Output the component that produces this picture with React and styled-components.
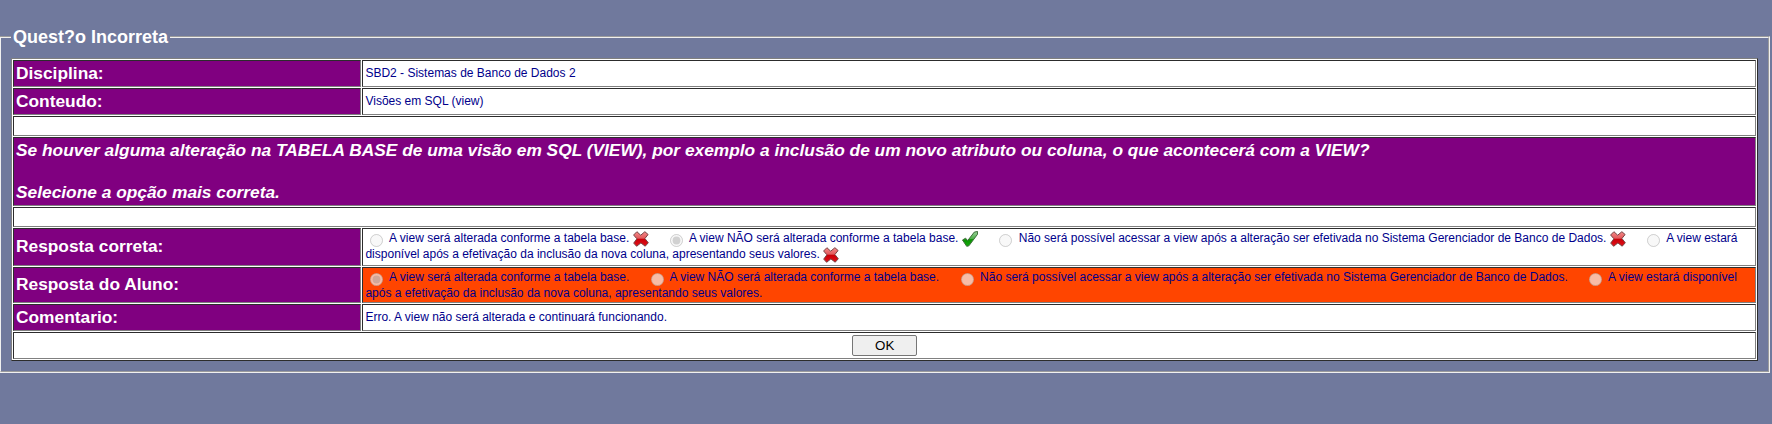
import React from "react";
import styled, { createGlobalStyle } from "styled-components";

const GlobalStyle = createGlobalStyle`
  body {
    margin: 0;
    background: #70799d;
    font-family: "Liberation Sans", Arial, sans-serif;
    overflow: hidden;
  }
`;

const Panel = styled.fieldset`
  box-sizing: border-box;
  width: 1771px;
  height: 347px;
  margin: 26px 0 0 -1px;
  padding: 11px 10px 10px;
  border: 2px groove #f0f0f0;
`;

const Title = styled.legend`
  padding: 1px 2px 0;
  color: #fff;
  font-size: 18px;
  font-weight: bold;
  line-height: 20px;
`;

const Sheet = styled.table`
  width: 1747px;
  table-layout: fixed;
  border: 1px outset gray;
  border-spacing: 1px;
  background: #fff;
`;

const Row = styled.tr`
  height: ${(p) => p.$height}px;
`;

const Cell = styled.td`
  box-sizing: border-box;
  padding: 2px 2px 2px 2.45px;
  border: 1px inset gray;
  color: #00008b;
  font-size: 12px;
  line-height: normal;
  text-align: ${(p) => p.$align || "left"};
  vertical-align: middle;
  background: ${(p) => (p.$wrong ? "#ff4500" : "#fff")};
`;

const Value = styled.div`
  padding-bottom: 1px;
`;

const Label = styled.td`
  box-sizing: border-box;
  padding: 2px 2px ${(p) => (p.$raised ? 4 : 2)}px;
  border: 1px inset gray;
  background: purple;
  color: #fff;
  font-size: 17.333px;
  font-weight: bold;
  font-style: ${(p) => (p.$question ? "italic" : "normal")};
  line-height: 21px;
`;

const Radio = styled.input`
  margin: 3px 3px 0 5px;
  vertical-align: middle;
`;

const Mark = styled.svg`
  width: 16px;
  height: 16px;
  vertical-align: middle;
`;

const OkButton = styled.button`
  display: block;
  width: 65px;
  height: 21px;
  margin: 0 auto;
  padding: 0;
  border: 1px solid #767676;
  border-radius: 2px;
  background: #efefef;
  color: #000;
  font: 13.333px "Liberation Sans", Arial, sans-serif;
`;

const Cross = () => (
  <Mark viewBox="0 0 16 16">
    <defs>
      <linearGradient id="red" x1="0" y1="0" x2="0" y2="1">
        <stop offset="0" stopColor="#f58a8a" />
        <stop offset=".45" stopColor="#e25a5c" />
        <stop offset=".5" stopColor="#c80008" />
        <stop offset="1" stopColor="#e4101a" />
      </linearGradient>
    </defs>
    <path
      d="M3.9.7 7.7 4.2 11.9.7 15.1 3.5 11.9 7.5 15.3 11.8 12.2 15.2 7.9 11.9 3.6 15.3.7 12.1 3.9 7.8.6 4z"
      fill="url(#red)"
      stroke="#744"
      strokeWidth="1"
      strokeLinejoin="round"
    />
  </Mark>
);

const Check = () => (
  <Mark viewBox="0 0 16 16">
    <defs>
      <linearGradient id="green" x1="0" y1="0" x2="0" y2="1">
        <stop offset="0" stopColor="#9bd29b" />
        <stop offset=".5" stopColor="#4cae48" />
        <stop offset=".55" stopColor="#0b9203" />
        <stop offset="1" stopColor="#14ac0a" />
      </linearGradient>
    </defs>
    <path
      d="M.5 9 3.6 7.2 5.7 9.6 12.3 1.1 15.6.5 15.5 3.3 6.9 14.8 4.7 15.3z"
      fill="url(#green)"
      stroke="#3d6e3a"
      strokeWidth="1"
      strokeLinejoin="round"
    />
  </Mark>
);

const options = [
  { text: "A view será alterada conforme a tabela base.", right: false },
  { text: "A view NÃO será alterada conforme a tabela base.", right: true },
  {
    text: "Não será possível acessar a view após a alteração ser efetivada no Sistema Gerenciador de Banco de Dados.",
    right: false,
  },
  {
    text: "A view estará disponível após a efetivação da inclusão da nova coluna, apresentando seus valores.",
    right: false,
  },
];

const Options = ({ name, selected, marked }) =>
  options.map((option, i) => (
    <React.Fragment key={i}>
      <Radio type="radio" name={name} disabled defaultChecked={i === selected} />
      {" " + option.text}
      {marked && <>{" "}{option.right ? <Check /> : <Cross />}</>}
      {i < options.length - 1 && "\u00a0\u00a0\u00a0\u00a0 "}
    </React.Fragment>
  ));

export default function App() {
  return (
    <>
      <GlobalStyle />
      <Panel>
        <Title>Quest?o Incorreta</Title>
        <Sheet>
          <colgroup>
            <col style={{ width: 348 }} />
            <col />
          </colgroup>
          <tbody>
            <Row $height={27}>
              <Label>Disciplina:</Label>
              <Cell>
                <Value>SBD2 - Sistemas de Banco de Dados 2</Value>
              </Cell>
            </Row>
            <Row $height={27}>
              <Label>Conteudo:</Label>
              <Cell>
                <Value>Visões em SQL (view)</Value>
              </Cell>
            </Row>
            <Row $height={20}>
              <Cell colSpan={2} />
            </Row>
            <Row $height={69}>
              <Label colSpan={2} $question>
                Se houver alguma alteração na TABELA BASE de uma visão em SQL (VIEW), por exemplo a
                inclusão de um novo atributo ou coluna, o que acontecerá com a VIEW?
                <br />
                <br />
                Selecione a opção mais correta.
              </Label>
            </Row>
            <Row $height={20}>
              <Cell colSpan={2} />
            </Row>
            <Row $height={38}>
              <Label $raised>Resposta correta:</Label>
              <Cell>
                <Options name="correct" selected={1} marked />
              </Cell>
            </Row>
            <Row $height={36}>
              <Label $raised>Resposta do Aluno:</Label>
              <Cell $wrong>
                <Options name="student" selected={0} />
              </Cell>
            </Row>
            <Row $height={27}>
              <Label>Comentario:</Label>
              <Cell>
                <Value>Erro. A view não será alterada e continuará funcionando.</Value>
              </Cell>
            </Row>
            <Row $height={27}>
              <Cell colSpan={2} $align="center">
                <OkButton>OK</OkButton>
              </Cell>
            </Row>
          </tbody>
        </Sheet>
      </Panel>
    </>
  );
}
